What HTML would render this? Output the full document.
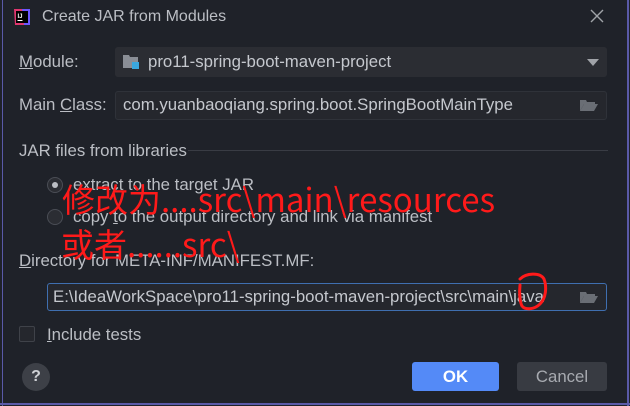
<!DOCTYPE html>
<html><head><meta charset="utf-8"><style>
body{margin:0;width:630px;height:406px;background:#1f2229;position:relative;overflow:hidden;font-family:"Liberation Sans","Noto Sans CJK SC",sans-serif;color:#bbbec4;font-size:16.8px}
.a{position:absolute;white-space:nowrap}
.fld{position:absolute;background:#2b2d33;border-radius:3px}
.u{text-decoration:underline}
.red{position:absolute;color:#ff1a1a;font-family:"Noto Sans CJK SC",sans-serif;white-space:nowrap;line-height:1;font-size:33px}
</style></head><body>
<div class="a" style="left:2px;top:0;width:1px;height:406px;background:#5a5aa8"></div>
<div class="a" style="left:627px;top:0;width:2px;height:406px;background:#5a5aa8"></div>
<div class="a" style="left:0;top:403px;width:630px;height:2px;background:#5a5aa8"></div>
<svg class="a" style="left:12px;top:7px" width="20" height="20" viewBox="0 0 20 20"><path d="M2 2h14l2 6-3 10H3z" fill="#e0366e"/><path d="M10 2h8v16h-6z" fill="#6b57ff"/><rect x="4" y="4" width="12" height="12" fill="#000"/><text x="5.5" y="11" font-size="6" fill="#fff" font-family="Liberation Sans" font-weight="bold">IJ</text><rect x="5.5" y="13" width="5" height="1" fill="#fff"/></svg>
<div class="a" style="left:42px;top:8px;font-size:16px;color:#bbbec4">Create JAR from Modules</div>
<svg class="a" style="left:590px;top:9px" width="14" height="14"><path d="M1 1L13 13M13 1L1 13" stroke="#a0a3a8" stroke-width="1.4"/></svg>
<div class="a" style="left:19px;top:52px"><span class="u">M</span>odule:</div>
<div class="fld" style="left:115px;top:47px;width:492px;height:30px"></div>
<svg class="a" style="left:123px;top:54px" width="16" height="16"><path d="M0 1h6l1 2h8v11H0z" fill="#8a8e96"/><rect x="9" y="8" width="7" height="7" fill="#3aa7de"/></svg>
<div class="a" style="left:148px;top:52px;color:#c5c8ce">pro11-spring-boot-maven-project</div>
<svg class="a" style="left:587px;top:59px" width="12" height="8"><path d="M0 0h12L6 7z" fill="#a0a3a8"/></svg>
<div class="a" style="left:19px;top:95px">Main <span class="u">C</span>lass:</div>
<div class="fld" style="left:115px;top:91px;width:492px;height:29px;background:#25272d;border:1px solid #2f3239;box-sizing:border-box"></div>
<div class="a" style="left:123px;top:95px;color:#c5c8ce">com.yuanbaoqiang.spring.boot.SpringBootMainType</div>
<svg class="a" style="left:580px;top:98px" width="18" height="14"><path d="M0 2h6l1 2h8v2H4L0 13z" fill="#6a6e75"/><path d="M4 6h14l-4 7H0z" fill="#6a6e75"/></svg>
<div class="a" style="left:19px;top:141px">JAR files from libraries</div>
<div class="a" style="left:188px;top:150px;width:420px;height:1px;background:#393c44"></div>
<div class="a" style="left:47px;top:177px;width:14px;height:14px;border-radius:50%;border:1px solid #4a4d55;background:#2b2d33"></div>
<div class="a" style="left:52px;top:182px;width:6px;height:6px;border-radius:50%;background:#bbbec4"></div>
<div class="a" style="left:73px;top:175px">extract to the target JAR</div>
<div class="a" style="left:47px;top:209px;width:14px;height:14px;border-radius:50%;border:1px solid #4a4d55;background:#2b2d33"></div>
<div class="a" style="left:73px;top:207px">copy <span class="u">t</span>o the output directory and link via manifest</div>
<div class="a" style="left:19px;top:251px"><span class="u">D</span>irectory for META-INF/MANIFEST.MF:</div>
<div class="fld" style="left:47px;top:283px;width:560px;height:28px;border:1px solid #3f6fb0;box-sizing:border-box;background:#25272d"></div>
<div class="a" style="left:53px;top:287px;color:#c5c8ce">E:\IdeaWorkSpace\pro11-spring-boot-maven-project\src\main\java</div>
<svg class="a" style="left:580px;top:290px" width="18" height="14"><path d="M0 2h6l1 2h8v2H4L0 13z" fill="#6a6e75"/><path d="M4 6h14l-4 7H0z" fill="#6a6e75"/></svg>
<svg class="a" style="left:508px;top:269px" width="48" height="50"><path d="M12 10C18 4 32 3 36 10c3 8 2 19-4 25-6 6-15 6-18 2-2-4-3-12-2-21" fill="none" stroke="#ff1a1a" stroke-width="3" stroke-linecap="round"/></svg>
<div class="a" style="left:19px;top:326px;width:14px;height:14px;border:1px solid #3f4249;border-radius:2px;background:#25272d"></div>
<div class="a" style="left:47px;top:325px"><span class="u">I</span>nclude tests</div>
<div class="a" style="left:22px;top:363px;width:28px;height:28px;border-radius:50%;background:#3d4047;color:#cfd1d5;font-weight:bold;font-size:16px;text-align:center;line-height:28px">?</div>
<div class="a" style="left:412px;top:362px;width:87px;height:29px;border-radius:3px;background:#548af7;color:#fff;font-weight:bold;text-align:center;line-height:29px">OK</div>
<div class="a" style="left:517px;top:362px;width:90px;height:29px;border-radius:3px;background:#383b42;color:#a7aab0;text-align:center;line-height:29px">Cancel</div>
<div class="red" style="left:62px;top:182px">修改为....src\main\resources</div>
<div class="red" style="left:61px;top:227px">或者......src\</div>
</body></html>
